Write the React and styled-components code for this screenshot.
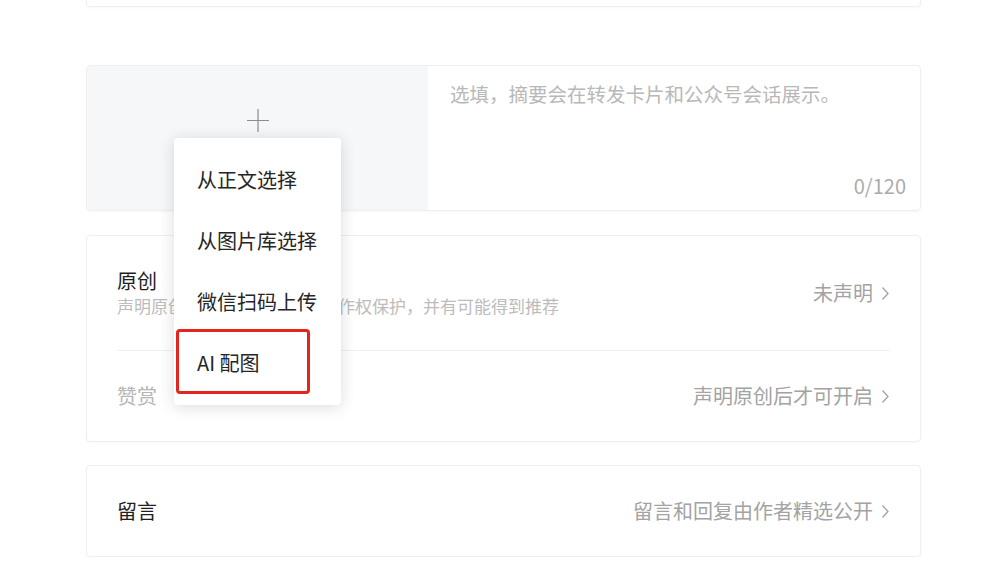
import React from "react";
import styled, { createGlobalStyle } from "styled-components";

const GlobalStyle = createGlobalStyle`
    body {
        margin: 0;
        background: #ffffff;
        font-family: "Noto Sans CJK SC", "Noto Sans", sans-serif;
    }
`;

const Page = styled.div`
    width: 835px;
    padding-left: 86px;
    display: flex;
    flex-direction: column;
`;

const Card = styled.div`
    background: #ffffff;
    border: 1px solid #efefef;
    border-radius: 4px;
    box-shadow: 0 1px 3px rgba(0, 0, 0, 0.03);
    margin-top: ${props => props.gap || 0}px;
`;

const TopEdge = styled(Card)`
    height: 7px;
    border-top: none;
    border-radius: 0 0 4px 4px;
    box-sizing: border-box;
`;

const CoverCard = styled(Card)`
    display: flex;
    height: 146px;
    box-sizing: border-box;
`;

const CoverPick = styled.div`
    position: relative;
    width: 341px;
    background: #f6f7f9;
    border-radius: 4px 0 0 4px;
    display: flex;
    justify-content: center;
    padding-top: 43px;
    box-sizing: border-box;
`;

const Summary = styled.div`
    flex: 1;
    display: flex;
    flex-direction: column;
    justify-content: space-between;
    padding: 14px 14px 10px 22px;
    font-size: 19.5px;
    line-height: 28px;
    color: #b8b8b8;
`;

const Counter = styled.div`
    align-self: flex-end;
    font-size: 20px;
    color: #ababab;
`;

const Menu = styled.ul`
    position: absolute;
    left: 87px;
    top: 72px;
    width: 167px;
    margin: 0;
    padding: 11px 0 12px;
    list-style: none;
    background: #ffffff;
    border-radius: 4px;
    box-shadow: 0 2px 16px rgba(0, 0, 0, 0.14);
    z-index: 2;
`;

const MenuItem = styled.li`
    position: relative;
    height: 61px;
    display: flex;
    align-items: center;
    padding-left: 23px;
    font-size: 20px;
    color: #262626;
    &::after {
        content: "";
        display: ${props => props.marked ? "block" : "none"};
        position: absolute;
        left: 2px;
        right: 31px;
        top: -3px;
        bottom: -1px;
        border: 3px solid #e3241f;
        border-radius: 4px;
    }
`;

const Row = styled.div`
    display: flex;
    align-items: center;
    justify-content: space-between;
    padding: 32px 30px;
`;

const Divider = styled.div`
    height: 1px;
    margin: 0 30px;
    background: #f0f0f0;
`;

const Title = styled.div`
    font-size: 20px;
    line-height: 26px;
    color: ${props => props.muted ? "#b6b6b6" : "#1f1f1f"};
`;

const Sub = styled.div`
    font-size: 17px;
    line-height: 24px;
    color: #bcbcbc;
`;

const Value = styled.div`
    display: flex;
    align-items: center;
    gap: 8px;
    font-size: 20px;
    line-height: 26px;
    color: #a3a3a3;
`;

const Chevron = () => (
    <svg width="9" height="15" viewBox="0 0 9 15" fill="none">
        <path d="M1.5 1.5 L7 7.5 L1.5 13.5" stroke="#a3a3a3" strokeWidth="1.3" />
    </svg>
);

const Plus = () => (
    <svg width="22" height="23" viewBox="0 0 22 23" fill="none">
        <path d="M11 0 V23 M0 11.5 H22" stroke="#8c8c8c" strokeWidth="1.2" />
    </svg>
);

function App() {
    const items = ["从正文选择", "从图片库选择", "微信扫码上传", "AI 配图"];

    return (
        <>
            <GlobalStyle />
            <Page>
                <TopEdge />

                <CoverCard gap={58}>
                    <CoverPick>
                        <Plus />
                        <Menu>
                            {items.map((item, i) => (
                                <MenuItem key={item} marked={i === items.length - 1}>{item}</MenuItem>
                            ))}
                        </Menu>
                    </CoverPick>
                    <Summary>
                        <div>选填，摘要会在转发卡片和公众号会话展示。</div>
                        <Counter>0/120</Counter>
                    </Summary>
                </CoverCard>

                <Card gap={24}>
                    <Row>
                        <div>
                            <Title>原创</Title>
                            <Sub>声明原创可获得原创标识和著作权保护，并有可能得到推荐</Sub>
                        </div>
                        <Value>未声明<Chevron /></Value>
                    </Row>
                    <Divider />
                    <Row>
                        <Title muted>赞赏</Title>
                        <Value>声明原创后才可开启<Chevron /></Value>
                    </Row>
                </Card>

                <Card gap={23}>
                    <Row>
                        <Title>留言</Title>
                        <Value>留言和回复由作者精选公开<Chevron /></Value>
                    </Row>
                </Card>
            </Page>
        </>
    );
}

export default App;
